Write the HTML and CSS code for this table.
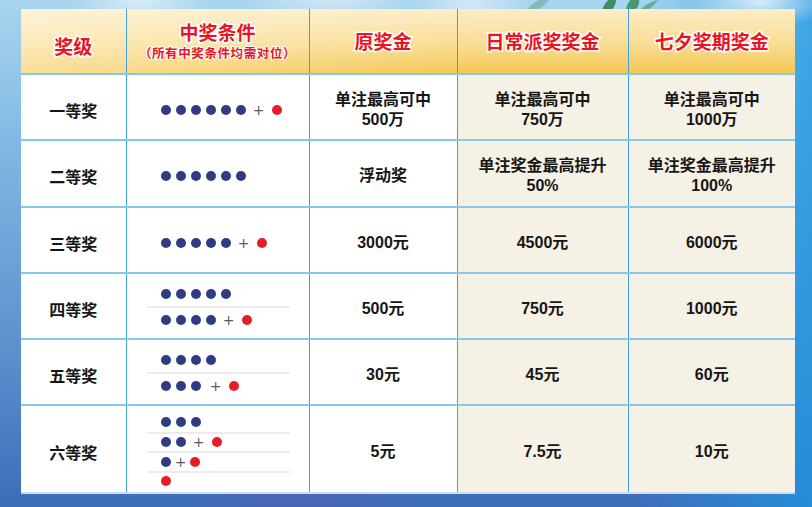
FILE: index.html
```html
<!DOCTYPE html>
<html lang="zh-CN">
<head>
<meta charset="utf-8">
<title>七夕奖期奖金</title>
<link rel="stylesheet" href="styles.css">
</head>
<body>
<svg class="leaves" width="160" height="24" viewBox="0 0 160 24">
  <path d="M6 22 C10 10 22 4 34 2 C28 10 20 18 6 22 Z" fill="#6fa58d" opacity="0.6"/>
  <path d="M84 24 C82 14 88 6 98 0 C100 10 94 18 84 24 Z" fill="#3f8a68"/>
  <path d="M108 24 C106 12 112 4 120 0 C124 10 118 18 108 24 Z" fill="#4c9673"/>
  <path d="M116 24 C122 14 130 8 140 6 C134 14 126 20 116 24 Z" fill="#5aa080" opacity="0.8"/>
</svg>
<div class="page">
  <table class="prize">
    <colgroup>
      <col class="c1"><col class="c2"><col class="c3"><col class="c4"><col class="c5">
    </colgroup>
    <thead>
      <tr class="head">
        <th class="h-rank"><span class="ht">奖级</span></th>
        <th><span class="ht">中奖条件</span><span class="hsub">（所有中奖条件均需对位）</span></th>
        <th><span class="ht">原奖金</span></th>
        <th><span class="ht">日常派奖奖金</span></th>
        <th><span class="ht">七夕奖期奖金</span></th>
      </tr>
    </thead>
    <tbody>
      <tr class="r1">
        <td class="rank">一等奖</td>
        <td class="cond-cell">
          <div class="cond one">
            <div class="line"><span class="b"></span><span class="b"></span><span class="b"></span><span class="b"></span><span class="b"></span><span class="b"></span><span class="plus">+</span><span class="r"></span></div>
          </div>
        </td>
        <td class="t"><span class="ln">单注最高可中</span><span class="ln">500万</span></td>
        <td class="t cream"><span class="ln">单注最高可中</span><span class="ln">750万</span></td>
        <td class="t cream"><span class="ln">单注最高可中</span><span class="ln">1000万</span></td>
      </tr>
      <tr class="r2">
        <td class="rank">二等奖</td>
        <td class="cond-cell">
          <div class="cond one">
            <div class="line"><span class="b"></span><span class="b"></span><span class="b"></span><span class="b"></span><span class="b"></span><span class="b"></span></div>
          </div>
        </td>
        <td class="t">浮动奖</td>
        <td class="t cream"><span class="ln">单注奖金最高提升</span><span class="ln">50%</span></td>
        <td class="t cream"><span class="ln">单注奖金最高提升</span><span class="ln">100%</span></td>
      </tr>
      <tr class="r3">
        <td class="rank">三等奖</td>
        <td class="cond-cell">
          <div class="cond one">
            <div class="line"><span class="b"></span><span class="b"></span><span class="b"></span><span class="b"></span><span class="b"></span><span class="plus">+</span><span class="r"></span></div>
          </div>
        </td>
        <td class="t">3000元</td>
        <td class="t cream">4500元</td>
        <td class="t cream">6000元</td>
      </tr>
      <tr class="r4">
        <td class="rank">四等奖</td>
        <td class="cond-cell">
          <div class="cond mid">
            <div class="line"><span class="b"></span><span class="b"></span><span class="b"></span><span class="b"></span><span class="b"></span></div>
            <div class="line"><span class="b"></span><span class="b"></span><span class="b"></span><span class="b"></span><span class="plus">+</span><span class="r"></span></div>
          </div>
        </td>
        <td class="t">500元</td>
        <td class="t cream">750元</td>
        <td class="t cream">1000元</td>
      </tr>
      <tr class="r5">
        <td class="rank">五等奖</td>
        <td class="cond-cell">
          <div class="cond mid">
            <div class="line"><span class="b"></span><span class="b"></span><span class="b"></span><span class="b"></span></div>
            <div class="line"><span class="b"></span><span class="b"></span><span class="b"></span><span class="plus wide">+</span><span class="r"></span></div>
          </div>
        </td>
        <td class="t">30元</td>
        <td class="t cream">45元</td>
        <td class="t cream">60元</td>
      </tr>
      <tr class="r6">
        <td class="rank">六等奖</td>
        <td class="cond-cell">
          <div class="cond small">
            <div class="line"><span class="b"></span><span class="b"></span><span class="b"></span></div>
            <div class="line"><span class="b"></span><span class="b"></span><span class="plus">+</span><span class="r"></span></div>
            <div class="line"><span class="b"></span><span class="plus tight">+</span><span class="r"></span></div>
            <div class="line"><span class="r"></span></div>
          </div>
        </td>
        <td class="t">5元</td>
        <td class="t cream">7.5元</td>
        <td class="t cream">10元</td>
      </tr>
    </tbody>
  </table>
</div>
</body>
</html>
```
FILE: styles.css
```css
* { box-sizing: border-box; margin: 0; padding: 0; }

html, body { width: 812px; height: 507px; overflow: hidden; }

body {
  position: relative;
  font-family: "Noto Sans CJK SC", "Noto Sans", sans-serif;
  background:
    radial-gradient(70px 22px at 140px 2px, rgba(255,255,255,0.55), rgba(255,255,255,0)),
    radial-gradient(90px 24px at 330px 0px, rgba(255,255,255,0.45), rgba(255,255,255,0)),
    radial-gradient(60px 20px at 470px 4px, rgba(255,255,255,0.5), rgba(255,255,255,0)),
    radial-gradient(70px 26px at 760px 2px, rgba(255,255,255,0.75), rgba(255,255,255,0)),
    radial-gradient(120px 40px at 300px 520px, rgba(110,80,180,0.45), rgba(110,80,180,0)),
    linear-gradient(to right, rgba(30,150,225,0) 78%, rgba(30,150,225,0.75) 100%),
    linear-gradient(to bottom, #a8d5ef 0%, #7fb7e2 30%, #5b8fcd 70%, #3d6cb9 100%);
}

.leaves {
  position: absolute;
  left: 518px;
  top: -6px;
}

.page {
  position: relative;
  padding: 9px 17px 0 21px;
}

table.prize {
  border-collapse: collapse;
  table-layout: fixed;
  width: 774px;
}

col.c1 { width: 105px; }
col.c2 { width: 183px; }
col.c3 { width: 148px; }
col.c4 { width: 171px; }
col.c5 { width: 167px; }

th, td {
  padding: 0;
  text-align: center;
  vertical-align: middle;
  border-left: 1px solid #3ea2de;
  border-right: 1px solid #3ea2de;
}

th:first-child, td:first-child { border-left: none; }
th:last-child, td:last-child { border-right: none; }

td { border-top: 2px solid #86c8ec; background: #ffffff; }

tr.head {
  height: 65px;
  background:
    linear-gradient(to right, rgba(255,250,235,0.45) 0%, rgba(255,250,235,0) 60%),
    linear-gradient(to bottom, #fcedc8 0%, #f9dc92 55%, #f4c650 100%);
}

tr.head th { background: transparent; padding-top: 4px; }
tr.head th.h-rank { padding-top: 14px; }

.ht, .hsub {
  display: block;
  color: #e8141f;
  font-family: "Liberation Sans", "Noto Sans CJK SC", sans-serif;
  font-weight: 700;
  paint-order: stroke fill;
}

.ht {
  font-size: 19px;
  line-height: 22px;
  -webkit-text-stroke: 3px #ffffff;
}

.hsub {
  font-size: 12.5px;
  line-height: 18px;
  letter-spacing: 0.6px;
  -webkit-text-stroke: 2px #ffffff;
}

tr.r1 { height: 66px; }
tr.r2 { height: 67px; }
tr.r3 { height: 66px; }
tr.r4 { height: 66px; }
tr.r5 { height: 66px; }
tr.r6 { height: 88px; }

tbody tr:last-child td { border-bottom: 2px solid #cfdcf2; }

.rank, .t {
  color: #161616;
  font-size: 16px;
  font-weight: 700;
  line-height: 20px;
  padding-top: 5px;
}

.t {
  font-family: "Liberation Sans", "Noto Sans CJK SC", sans-serif;
}

.ln { display: block; line-height: 20px; }

.t.cream { background: #f6f1e5; }

.cond-cell { text-align: left; }

.cond {
  margin-left: 20px;
  width: 143px;
}

.cond.one { padding-top: 5px; }
.cond.small { padding-top: 4px; }

.line {
  display: flex;
  align-items: center;
  height: 20px;
  padding-left: 14px;
}

.cond.mid .line { height: 25px; }
.cond.small .line { height: 19.5px; }

.line + .line { border-top: 2px solid #ececec; }

.b, .r {
  display: inline-block;
  width: 10px;
  height: 10px;
  border-radius: 50%;
  margin-right: 5px;
  flex: none;
}

.b { background: #2f3c84; }
.r { background: #e41d27; }

.plus {
  display: inline-block;
  width: 16px;
  margin-right: 5px;
  text-align: center;
  color: #5b5b5b;
  font-family: "DejaVu Sans", sans-serif;
  font-size: 14px;
  line-height: 12px;
  flex: none;
}

.plus.wide {
  margin-left: 2px;
}

.plus.tight {
  width: 14px;
  margin-left: -2px;
  margin-right: 2px;
}
```
